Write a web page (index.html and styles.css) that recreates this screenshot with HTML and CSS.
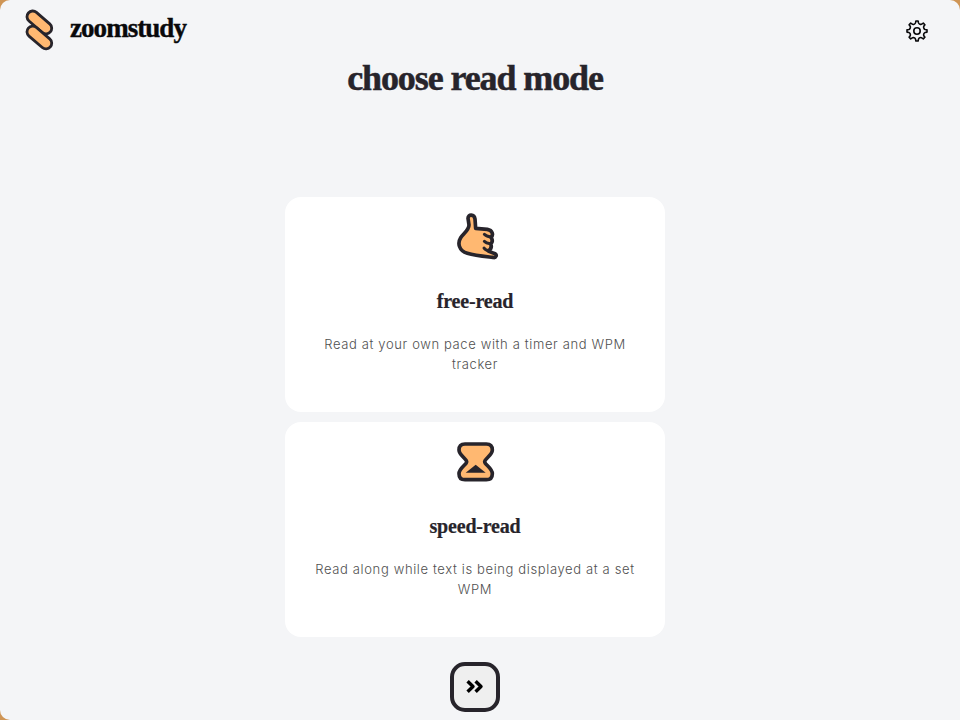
FILE: index.html
```
<!DOCTYPE html>
<html lang="en">
<head>
<meta charset="utf-8">
<title>zoomstudy</title>
<link rel="stylesheet" href="styles.css">
</head>
<body>
<div class="app">
  <header class="header">
    <div class="brand">
      <svg class="logo" viewBox="0 0 30 42" fill="none" stroke-linecap="round">
        <path class="ink" d="M7.7 7.7L21 19.2"/><path class="peach" d="M7.7 7.7L21 19.2"/>
        <path class="ink" d="M7.7 22.8L21 34.2"/><path class="peach" d="M7.7 22.8L21 34.2"/>
      </svg>
      <span class="name">zoomstudy</span>
    </div>
    <svg class="gear" viewBox="0 0 24 24" fill="none" stroke="#09090b" stroke-width="1.6" stroke-linejoin="round">
      <path d="M13.1 2L13.5 3.9C13.8 5 15.8 5.8 16.7 5.2L18.3 4.1L19.9 5.7L18.8 7.3C18.2 8.2 19 10.2 20.1 10.5L22 10.9V13.1L20.1 13.5C19 13.8 18.2 15.8 18.8 16.7L19.9 18.3L18.3 19.9L16.7 18.8C15.8 18.2 13.8 19 13.5 20.1L13.1 22H10.9L10.5 20.1C10.2 19 8.2 18.2 7.3 18.8L5.7 19.9L4.1 18.3L5.2 16.7C5.8 15.8 5 13.8 3.9 13.5L2 13.1V10.9L3.9 10.5C5 10.2 5.8 8.2 5.2 7.3L4.1 5.7L5.7 4.1L7.3 5.2C8.2 5.8 10.2 5 10.5 3.9L10.9 2Z"/>
      <circle cx="12" cy="12" r="3.2"/>
    </svg>
  </header>
  <main class="main">
    <h1 class="title">choose read mode</h1>
    <section class="cards">
      <article class="card">
        <svg class="icon" viewBox="0 0 210 180" fill="#ffb871" stroke="#27242b" stroke-width="11" stroke-linecap="round" stroke-linejoin="round">
          <path d="M84 40C84 27 103 27 105 42L107 70L142 73C158 76 161 90 153 97C158 105 157 113 152 117C156 125 153 132 145 138L162 145C174 148 168 160 158 157C130 154 105 152 82 145C56 137 52 114 62 98C69 87 87 76 87 60Z"/>
          <path fill="none" stroke-width="9" d="M133 88Q138 94 152 96M133 109Q138 115 151 116M132 129Q136 136 146 137"/>
        </svg>
        <h2 class="mode">free-read</h2>
        <p class="text">Read at your own pace with a timer and WPM<br>tracker</p>
      </article>
      <article class="card">
        <svg class="icon" viewBox="0 0 210 180" fill="#ffb871" stroke="#27242b" stroke-width="11" stroke-linejoin="round">
          <path d="M75 42H139C153 42 157 51 157 60C157 76 134 86 134 95C134 104 157 114 157 131C157 142 152 149 139 149H75C62 149 57 142 57 131C57 114 80 104 80 95C80 86 57 76 57 60C57 51 61 42 75 42Z"/>
          <path d="M107 104L77 128H137Z" fill="#27242b" stroke="none"/>
        </svg>
        <h2 class="mode">speed-read</h2>
        <p class="text">Read along while text is being displayed at a set<br>WPM</p>
      </article>
    </section>
    <button class="next" aria-label="Next"><svg viewBox="0 0 20 16" fill="none" stroke="#000" stroke-width="3.4" stroke-linejoin="round"><path d="M2.6 2.2L8 7.5L2.6 12.8M10.6 2.2L16 7.5L10.6 12.8"/></svg></button>
  </main>
</div>
</body>
</html>
```
FILE: styles.css
```
* { box-sizing: border-box; }
body { margin: 0; background: linear-gradient(90deg, #cf9555 50%, #f4f5f7 50%) bottom / 100% 50% no-repeat, #cf9555; }
.app { height: 720px; overflow: hidden; background: #f4f5f7; border-radius: 10px 10px 0 10px; color: #27242b; }
.header { display: flex; justify-content: space-between; align-items: center; height: 60px; padding: 0 31px 0 25px; }
.brand { display: flex; align-items: center; gap: 15px; }
.logo { width: 30px; height: 42px; }
.logo .ink { stroke: #27242b; stroke-width: 14.2; }
.logo .peach { stroke: #ffb871; stroke-width: 8.6; }
.name { margin-top: -4px; font: bold 27px/32px "Liberation Serif", serif; letter-spacing: -0.95px; color: #09090b; -webkit-text-stroke: 0.4px; }
.gear { width: 24px; height: 24px; margin-top: 2px; }
.main { display: flex; flex-direction: column; align-items: center; width: 950px; }
.title { margin: 0; height: 137px; font: bold 36px/36px "Liberation Serif", serif; letter-spacing: -1.1px; white-space: nowrap; -webkit-text-stroke: 0.5px; }
.cards { display: flex; flex-direction: column; gap: 10px; }
.card { display: flex; flex-direction: column; align-items: center; width: 380px; height: 215px; padding-top: 8px; border-radius: 16px; background: #fff; }
.icon { width: 70px; height: 60px; }
.mode { margin: 24px 0 0; font: bold 20px/24px "Liberation Serif", serif; letter-spacing: -0.2px; -webkit-text-stroke: 0.2px; }
.text { margin: 21px 0 0; font: 300 13px/20px Inter, sans-serif; letter-spacing: 0.63px; color: #505050; text-align: center; white-space: nowrap; }
.next { display: flex; align-items: center; justify-content: center; width: 50px; height: 50px; margin-top: 25px; padding: 0; border: 4px solid #27242b; border-radius: 15px; background: #efefef; }
.next svg { width: 20px; height: 16px; }
```
